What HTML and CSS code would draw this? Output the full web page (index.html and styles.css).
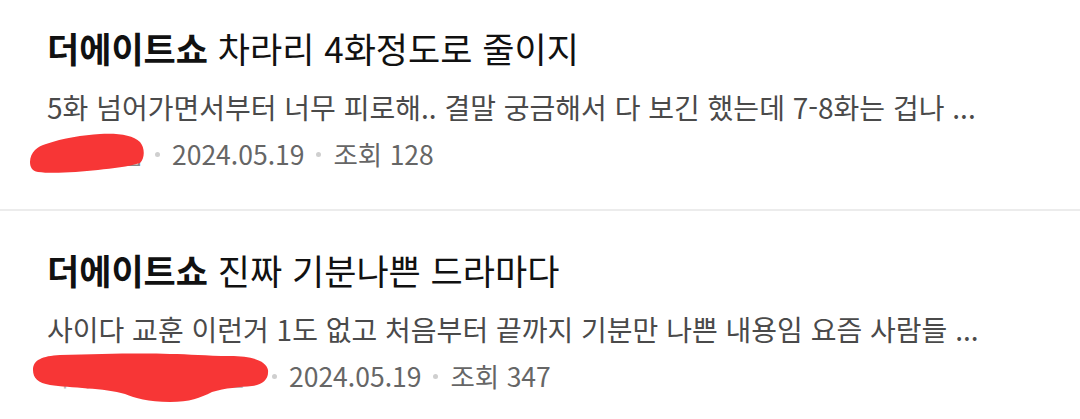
FILE: index.html
```html
<!DOCTYPE html>
<html lang="ko">
<head>
<meta charset="utf-8">
<link rel="stylesheet" href="styles.css">
</head>
<body>
<ul class="list">
  <li class="item">
    <div class="title"><b>더에이트쇼</b> 차라리 4화정도로 줄이지</div>
    <div class="summary">5화 넘어가면서부터 너무 피로해.. 결말 궁금해서 다 보긴 했는데 7-8화는 겁나 ...</div>
    <div class="meta">
      <span class="author a1">닉네임님
        <svg class="scribble" width="120" height="44" viewBox="0 0 120 44"><path d="M2 30 C2 20 10 14 18 12 C35 6 55 3 72 2 C90 1 105 3 112 10 C117 16 117 26 112 31 C100 35 85 36 70 38 C50 40 25 42 10 40 C4 39 2 35 2 30 Z" fill="#f73636"/></svg>
      </span>
      <span class="dot"></span>
      <span>2024.05.19</span>
      <span class="dot"></span>
      <span>조회 128</span>
    </div>
  </li>
  <li class="item">
    <div class="title"><b>더에이트쇼</b> 진짜 기분나쁜 드라마다</div>
    <div class="summary">사이다 교훈 이런거 1도 없고 처음부터 끝까지 기분만 나쁜 내용임 요즘 사람들 ...</div>
    <div class="meta">
      <span class="author a2">닉네임닉네임닉네님
        <svg class="scribble" width="240" height="54" viewBox="0 0 240 54"><path d="M3 18 C3 8 12 4 30 3 C70 2 110 1 140 2 C160 2 175 4 200 4 C220 4 236 8 238 18 C239 28 232 33 222 34 C210 35 195 36 182 40 C170 46 160 50 140 50 C118 50 105 46 95 42 C75 36 40 36 20 33 C8 31 3 26 3 18 Z" fill="#f73636"/></svg>
      </span>
      <span class="dot"></span>
      <span>2024.05.19</span>
      <span class="dot"></span>
      <span>조회 347</span>
    </div>
  </li>
</ul>
</body>
</html>
```

FILE: styles.css
```css
html, body {
  margin: 0;
  padding: 0;
  background: #ffffff;
}
body {
  font-family: "Noto Sans CJK KR", "Noto Sans", sans-serif;
  width: 1080px;
  height: 419px;
  overflow: hidden;
}
.list {
  list-style: none;
  margin: 0;
  padding: 0;
}
.item {
  padding: 35px 47px 38px 47px;
  border-bottom: 2px solid #ececec;
  display: flex;
  flex-direction: column;
}
.item:first-child {
  padding-top: 24px;
}
.title {
  font-size: 35px;
  line-height: 48px;
  color: #111;
}
.title b {
  font-weight: 700;
}
.summary {
  margin-top: 16px;
  font-size: 28px;
  line-height: 38px;
  color: #4a4a4a;
  white-space: nowrap;
}
.meta {
  margin-top: 11px;
  display: flex;
  align-items: center;
  gap: 12px;
  font-size: 26.5px;
  line-height: 34px;
  color: #666;
}
.author {
  position: relative;
  font-size: 24px;
  color: #888;
  white-space: nowrap;
  overflow: visible;
}
.scribble {
  position: absolute;
  pointer-events: none;
}
.a1 {
  width: 96px;
  text-align: right;
}
.a1 .scribble {
  left: -19px;
  top: -5px;
}
.a2 {
  width: 213px;
  color: #bbb;
}
.a2 .scribble {
  left: -17px;
  top: -7px;
}
.dot {
  width: 5px;
  height: 5px;
  border-radius: 50%;
  background: #cfcfcf;
}
```
